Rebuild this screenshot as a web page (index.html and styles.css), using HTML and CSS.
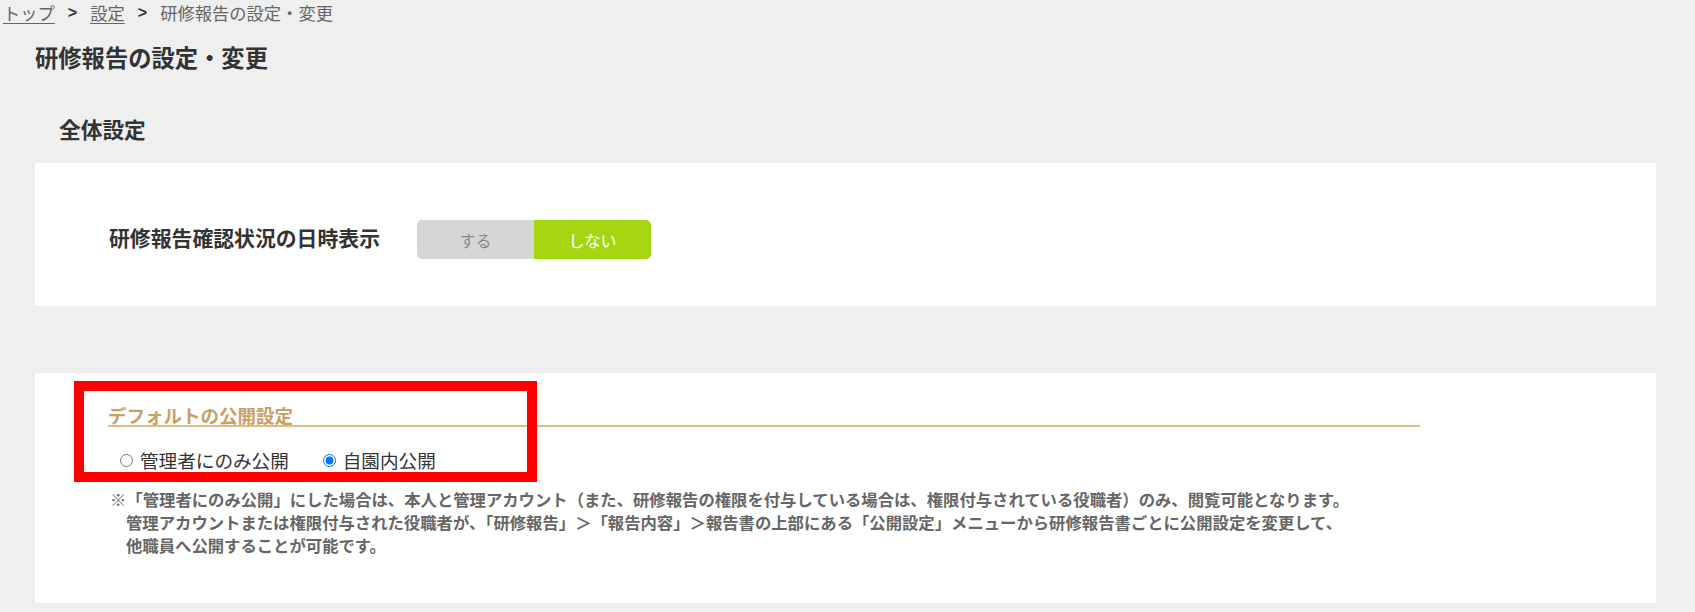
FILE: index.html
```html
<!DOCTYPE html>
<html lang="ja">
<head>
<meta charset="utf-8">
<title>研修報告の設定・変更</title>
<link rel="stylesheet" href="styles.css">
</head>
<body>
<nav class="breadcrumb">
  <a class="crumb-link" href="#">トップ</a>
  <span class="crumb-sep">&gt;</span>
  <a class="crumb-link" href="#">設定</a>
  <span class="crumb-sep">&gt;</span>
  <span class="crumb-current">研修報告の設定・変更</span>
</nav>
<h1 class="page-title">研修報告の設定・変更</h1>
<h2 class="section-title">全体設定</h2>
<section class="panel panel-display">
  <div class="setting-row">
    <div class="setting-label">研修報告確認状況の日時表示</div>
    <div class="toggle">
      <span class="toggle-btn toggle-off">する</span>
      <span class="toggle-btn toggle-on">しない</span>
    </div>
  </div>
</section>
<section class="panel panel-publish">
  <h3 class="publish-title">デフォルトの公開設定</h3>
  <div class="radio-row">
    <label class="radio-item"><input class="radio" type="radio" name="pub"><span>管理者にのみ公開</span></label>
    <label class="radio-item"><input class="radio" type="radio" name="pub" checked><span>自園内公開</span></label>
  </div>
  <p class="note">※「管理者にのみ公開」にした場合は、本人と管理アカウント（また、研修報告の権限を付与している場合は、権限付与されている役職者）のみ、閲覧可能となります。<br>管理アカウントまたは権限付与された役職者が、「研修報告」＞「報告内容」＞報告書の上部にある「公開設定」メニューから研修報告書ごとに公開設定を変更して、<br>他職員へ公開することが可能です。</p>
  <div class="highlight-box"></div>
</section>
</body>
</html>
```

FILE: styles.css
```css
html, body {
  margin: 0;
  padding: 0;
}
body {
  background: #efefef;
  font-family: "Noto Sans CJK JP", "Noto Sans", sans-serif;
  color: #333;
  width: 1695px;
  height: 612px;
  overflow: hidden;
}
.breadcrumb {
  display: flex;
  align-items: center;
  height: 25px;
  padding-left: 3px;
  font-size: 17.3px;
  line-height: 25px;
  color: #666;
}
.crumb-link {
  color: #666;
  text-decoration: underline;
  text-underline-offset: 3px;
  text-decoration-thickness: 1px;
}
.crumb-sep {
  font-family: "Liberation Sans", Arial, sans-serif;
  font-weight: bold;
  color: #333;
  font-size: 16px;
  margin: 0 13px 0 13px;
}
.crumb-current {
  color: #666;
}
.page-title {
  margin: 17px 0 0 35px;
  font-size: 23.3px;
  line-height: 30px;
  font-weight: bold;
  color: #333;
}
.section-title {
  margin: 43px 0 0 59px;
  font-size: 21.7px;
  line-height: 28px;
  font-weight: bold;
  color: #333;
}
.panel {
  background: #fff;
  margin-left: 35px;
  width: 1621px;
  box-sizing: border-box;
}
.panel-display {
  margin-top: 20px;
  height: 143px;
  padding: 57px 0 0 74px;
}
.setting-row {
  display: flex;
  align-items: center;
  height: 39px;
}
.setting-label {
  font-size: 20.85px;
  font-weight: bold;
  color: #333;
  line-height: 28px;
  margin-right: 37px;
  margin-top: -5px;
}
.toggle {
  display: flex;
  height: 39px;
  border-radius: 5px;
  overflow: hidden;
}
.toggle-btn {
  width: 117px;
  display: flex;
  align-items: center;
  justify-content: center;
  font-size: 16px;
}
.toggle-off {
  background: #d6d6d6;
  color: #888;
}
.toggle-on {
  background: #a6d612;
  color: #fff;
}
.panel-publish {
  position: relative;
  margin-top: 67px;
  height: 230px;
  padding: 32px 0 0 73px;
}
.publish-title {
  margin: 0;
  width: 1312px;
  font-size: 18.5px;
  line-height: 20px;
  font-weight: bold;
  color: #c9a063;
  border-bottom: 2px solid #dcbb8a;
}
.radio-row {
  display: flex;
  align-items: center;
  margin: 21px 0 0 12px;
  height: 24px;
}
.radio-item {
  display: flex;
  align-items: center;
  font-size: 18.6px;
  line-height: 24px;
  color: #333;
  margin-right: 34px;
}
.radio {
  width: 13px;
  height: 13px;
  margin: 0 7px 0 0;
  accent-color: #0075ff;
}
.note {
  margin: 16px 0 0 2px;
  padding-left: 16px;
  text-indent: -16px;
  font-size: 16.35px;
  line-height: 23px;
  font-weight: bold;
  color: #666;
}
.highlight-box {
  position: absolute;
  left: 39px;
  top: 8px;
  width: 463px;
  height: 101px;
  box-sizing: border-box;
  border: 10px solid #ff0000;
  pointer-events: none;
}
```
